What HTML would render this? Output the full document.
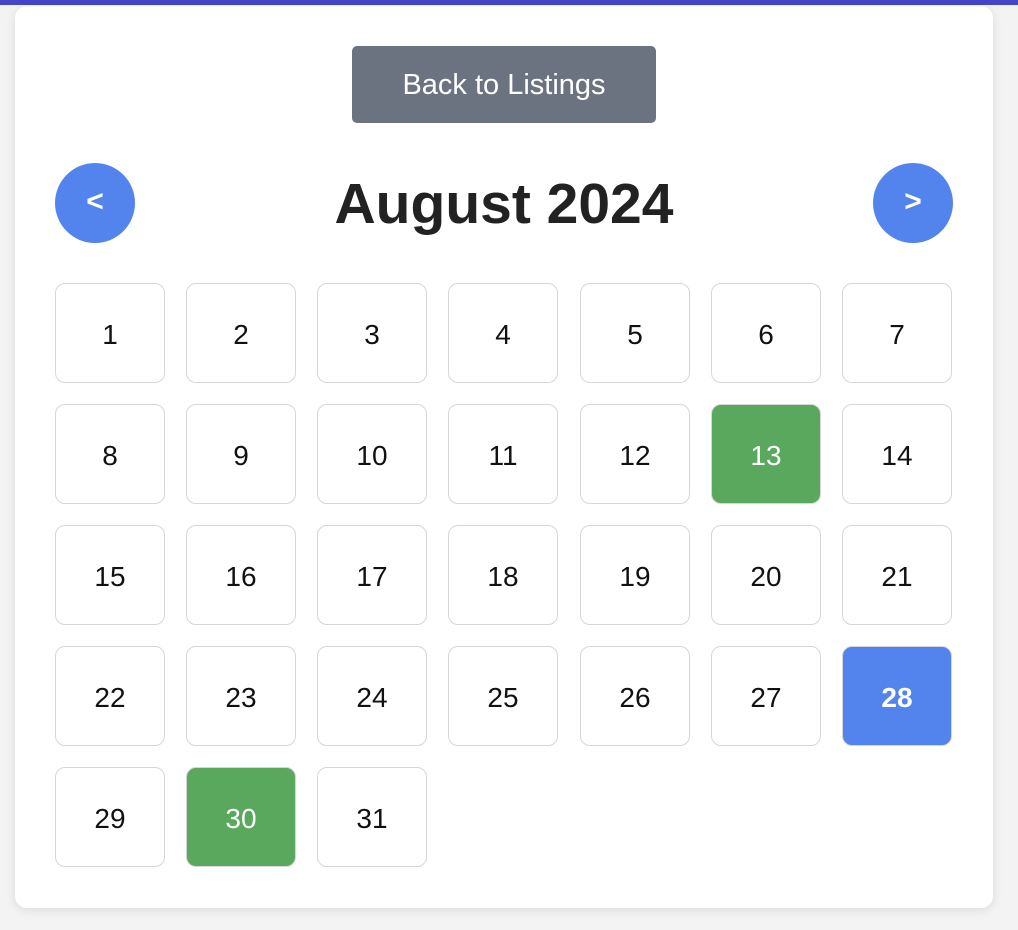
<!DOCTYPE html>
<html><head><style>
html,body{margin:0;padding:0;}
body{width:1018px;height:930px;background:#f3f3f3;font-family:"Liberation Sans",Arial,sans-serif;position:relative;overflow:hidden;}
.bar{position:absolute;left:0;top:0;width:1018px;height:5px;background:#4346c9;}
.card{position:absolute;left:15px;top:6px;width:978px;height:902px;background:#fff;border-radius:12px;box-shadow:0 2px 10px rgba(0,0,0,0.1);}
.btn{position:absolute;left:337px;top:40px;width:304px;height:77px;background:#6b7280;border-radius:5px;color:#fff;font-size:29px;line-height:79px;text-align:center;}
.nav{position:absolute;top:157px;width:80px;height:80px;border-radius:50%;background:#5383ec;color:#fff;font-size:30px;font-weight:bold;line-height:78px;text-align:center;}
.title{position:absolute;left:0;width:978px;top:166px;text-align:center;font-size:57px;font-weight:bold;color:#222;line-height:64px;}
.cell{position:absolute;width:108px;height:98px;border:1px solid #d6d6d6;border-radius:10px;background:#fff;font-size:28px;line-height:102px;text-align:center;color:#111;}
.g{background:#59a85d;color:#fff;}
.b{background:#5383ec;color:#fff;font-weight:bold;}
</style></head><body>
<div class="bar"></div>
<div class="card">
<div class="btn">Back to Listings</div>
<div class="nav" style="left:40px">&lt;</div>
<div class="title">August 2024</div>
<div class="nav" style="left:858px">&gt;</div>
</div>
<div style="position:absolute;left:15px;top:6px;">
<div class="cell" style="left:40px;top:277px">1</div>
<div class="cell" style="left:171px;top:277px">2</div>
<div class="cell" style="left:302px;top:277px">3</div>
<div class="cell" style="left:433px;top:277px">4</div>
<div class="cell" style="left:565px;top:277px">5</div>
<div class="cell" style="left:696px;top:277px">6</div>
<div class="cell" style="left:827px;top:277px">7</div>
<div class="cell" style="left:40px;top:398px">8</div>
<div class="cell" style="left:171px;top:398px">9</div>
<div class="cell" style="left:302px;top:398px">10</div>
<div class="cell" style="left:433px;top:398px">11</div>
<div class="cell" style="left:565px;top:398px">12</div>
<div class="cell g" style="left:696px;top:398px">13</div>
<div class="cell" style="left:827px;top:398px">14</div>
<div class="cell" style="left:40px;top:519px">15</div>
<div class="cell" style="left:171px;top:519px">16</div>
<div class="cell" style="left:302px;top:519px">17</div>
<div class="cell" style="left:433px;top:519px">18</div>
<div class="cell" style="left:565px;top:519px">19</div>
<div class="cell" style="left:696px;top:519px">20</div>
<div class="cell" style="left:827px;top:519px">21</div>
<div class="cell" style="left:40px;top:640px">22</div>
<div class="cell" style="left:171px;top:640px">23</div>
<div class="cell" style="left:302px;top:640px">24</div>
<div class="cell" style="left:433px;top:640px">25</div>
<div class="cell" style="left:565px;top:640px">26</div>
<div class="cell" style="left:696px;top:640px">27</div>
<div class="cell b" style="left:827px;top:640px">28</div>
<div class="cell" style="left:40px;top:761px">29</div>
<div class="cell g" style="left:171px;top:761px">30</div>
<div class="cell" style="left:302px;top:761px">31</div>
</div>
</body></html>
